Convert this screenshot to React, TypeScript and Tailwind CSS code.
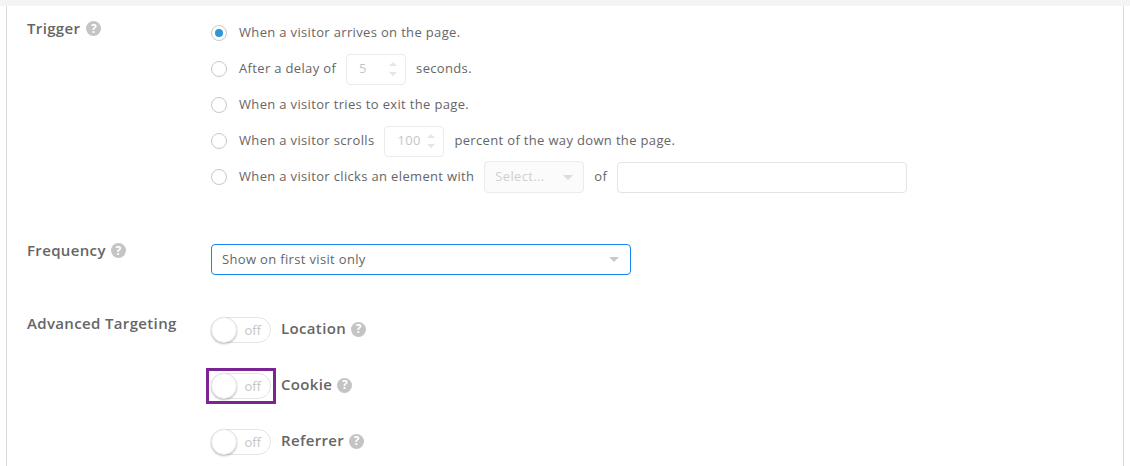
import { ReactNode } from "react";

const font = { fontFamily: '"Open Sans", sans-serif' };

function Help() {
  return (
    <span className="flex h-[15px] w-[15px] shrink-0 items-center justify-center rounded-full bg-[#c4c4c4] text-[12px] font-bold leading-none tracking-normal text-white">
      ?
    </span>
  );
}

function Radio({ checked }: { checked?: boolean }) {
  return (
    <span className="flex h-4 w-4 shrink-0 items-center justify-center rounded-full border border-[#c8c8c8] bg-white">
      {checked && <span className="h-2 w-2 rounded-full bg-[#2d96dc]" />}
    </span>
  );
}

function Caret({ color = "#c9c9c9" }: { color?: string }) {
  return (
    <svg width="10" height="5" viewBox="0 0 10 5" className="shrink-0">
      <path d="M0 0h10L5 5z" fill={color} />
    </svg>
  );
}

function Stepper({ value, width }: { value: string; width: string }) {
  return (
    <span className={`flex h-[31px] items-center justify-between rounded-[4px] border border-[#ebebeb] pl-[12px] pr-[8px] text-[13px] text-[#c6c6c6] ${width}`}>
      {value}
      <span className="flex flex-col gap-[6px]">
        <svg width="8" height="4" viewBox="0 0 8 4"><path d="M4 0l4 4H0z" fill="#e6e6e6" /></svg>
        <svg width="8" height="4" viewBox="0 0 8 4"><path d="M0 0h8L4 4z" fill="#e6e6e6" /></svg>
      </span>
    </span>
  );
}

function TriggerRow({ checked, children }: { checked?: boolean; children: ReactNode }) {
  return (
    <div className="flex h-9 items-center">
      <Radio checked={checked} />
      <div className="ml-[12px] flex items-center gap-[10px] text-[13px] tracking-[0.34px] text-[#666]">{children}</div>
    </div>
  );
}

function Toggle() {
  return (
    <span className="relative flex h-[26px] w-[60px] shrink-0 items-center justify-end rounded-full border border-[#e4e4e4] bg-white pr-[9px] pt-[2px] text-[13px] font-medium text-[#c4c4c4]">
      off
      <span className="absolute -left-px -top-px h-[26px] w-[26px] rounded-full border border-[#e6e6e6] bg-white shadow-[0_1px_2px_rgba(0,0,0,0.25)]" />
    </span>
  );
}

function ToggleRow({ label, marked }: { label: string; marked?: boolean }) {
  return (
    <div className="flex h-[56px] items-center">
      <span className="relative flex">
        <Toggle />
        {marked && <span className="absolute -inset-x-[5px] -inset-y-[5px] border-[3px] border-[#7b2595]" />}
      </span>
      <span className="-mt-[3px] ml-[10px] text-[15px] font-semibold tracking-[0.35px] text-[#666]">{label}</span>
      <span className="-mt-[2px] ml-[5px]"><Help /></span>
    </div>
  );
}

export default function App() {
  return (
    <div className="h-[466px] w-[1130px] overflow-hidden bg-white" style={font}>
      <div className="h-[6px] bg-[#f4f4f4]" />
      <div className="mx-[6px] h-[460px] border-x border-[#d9d9d9] pl-[20px]">
        <div className="flex h-[234px]">
          <div className="flex w-[184px] items-start gap-[6px] pt-[12px] text-[15px] font-semibold leading-[20px] tracking-[0.35px] text-[#666]">
            Trigger
            <span className="mt-[3px]"><Help /></span>
          </div>
          <div className="pt-[9px]">
            <TriggerRow checked>When a visitor arrives on the page.</TriggerRow>
            <TriggerRow>
              After a delay of <Stepper value="5" width="w-[60px]" /> seconds.
            </TriggerRow>
            <TriggerRow>When a visitor tries to exit the page.</TriggerRow>
            <TriggerRow>
              When a visitor scrolls <Stepper value="100" width="w-[60px]" /> percent of the way down the page.
            </TriggerRow>
            <TriggerRow>
              When a visitor clicks an element with
              <span className="flex h-[32px] w-[100px] items-center justify-between rounded-[4px] border border-[#ebebeb] bg-[#fbfbfb] px-[10px] text-[#d0d0d0]">
                Select... <Caret color="#dcdcdc" />
              </span>
              of
              <span className="h-[31px] w-[290px] rounded-[4px] border border-[#e4e4e4]" />
            </TriggerRow>
          </div>
        </div>
        <div className="flex h-[70px]">
          <div className="flex w-[184px] items-start gap-[5px] text-[15px] font-semibold leading-[20px] tracking-[0.35px] text-[#666]">
            Frequency
            <span className="mt-[3px]"><Help /></span>
          </div>
          <div className="mt-[4px] flex h-[31px] w-[420px] items-center justify-between rounded-[4px] border border-[#1b84f0] pl-[10px] pr-[11px] text-[13px] tracking-[0.34px] text-[#666]">
            Show on first visit only
            <Caret />
          </div>
        </div>
        <div className="flex">
          <div className="w-[184px] pt-[3px] text-[15px] font-semibold leading-[20px] tracking-[0.35px] text-[#666]">Advanced Targeting</div>
          <div className="-mt-[8px]">
            <ToggleRow label="Location" />
            <ToggleRow label="Cookie" marked />
            <ToggleRow label="Referrer" />
          </div>
        </div>
      </div>
    </div>
  );
}
